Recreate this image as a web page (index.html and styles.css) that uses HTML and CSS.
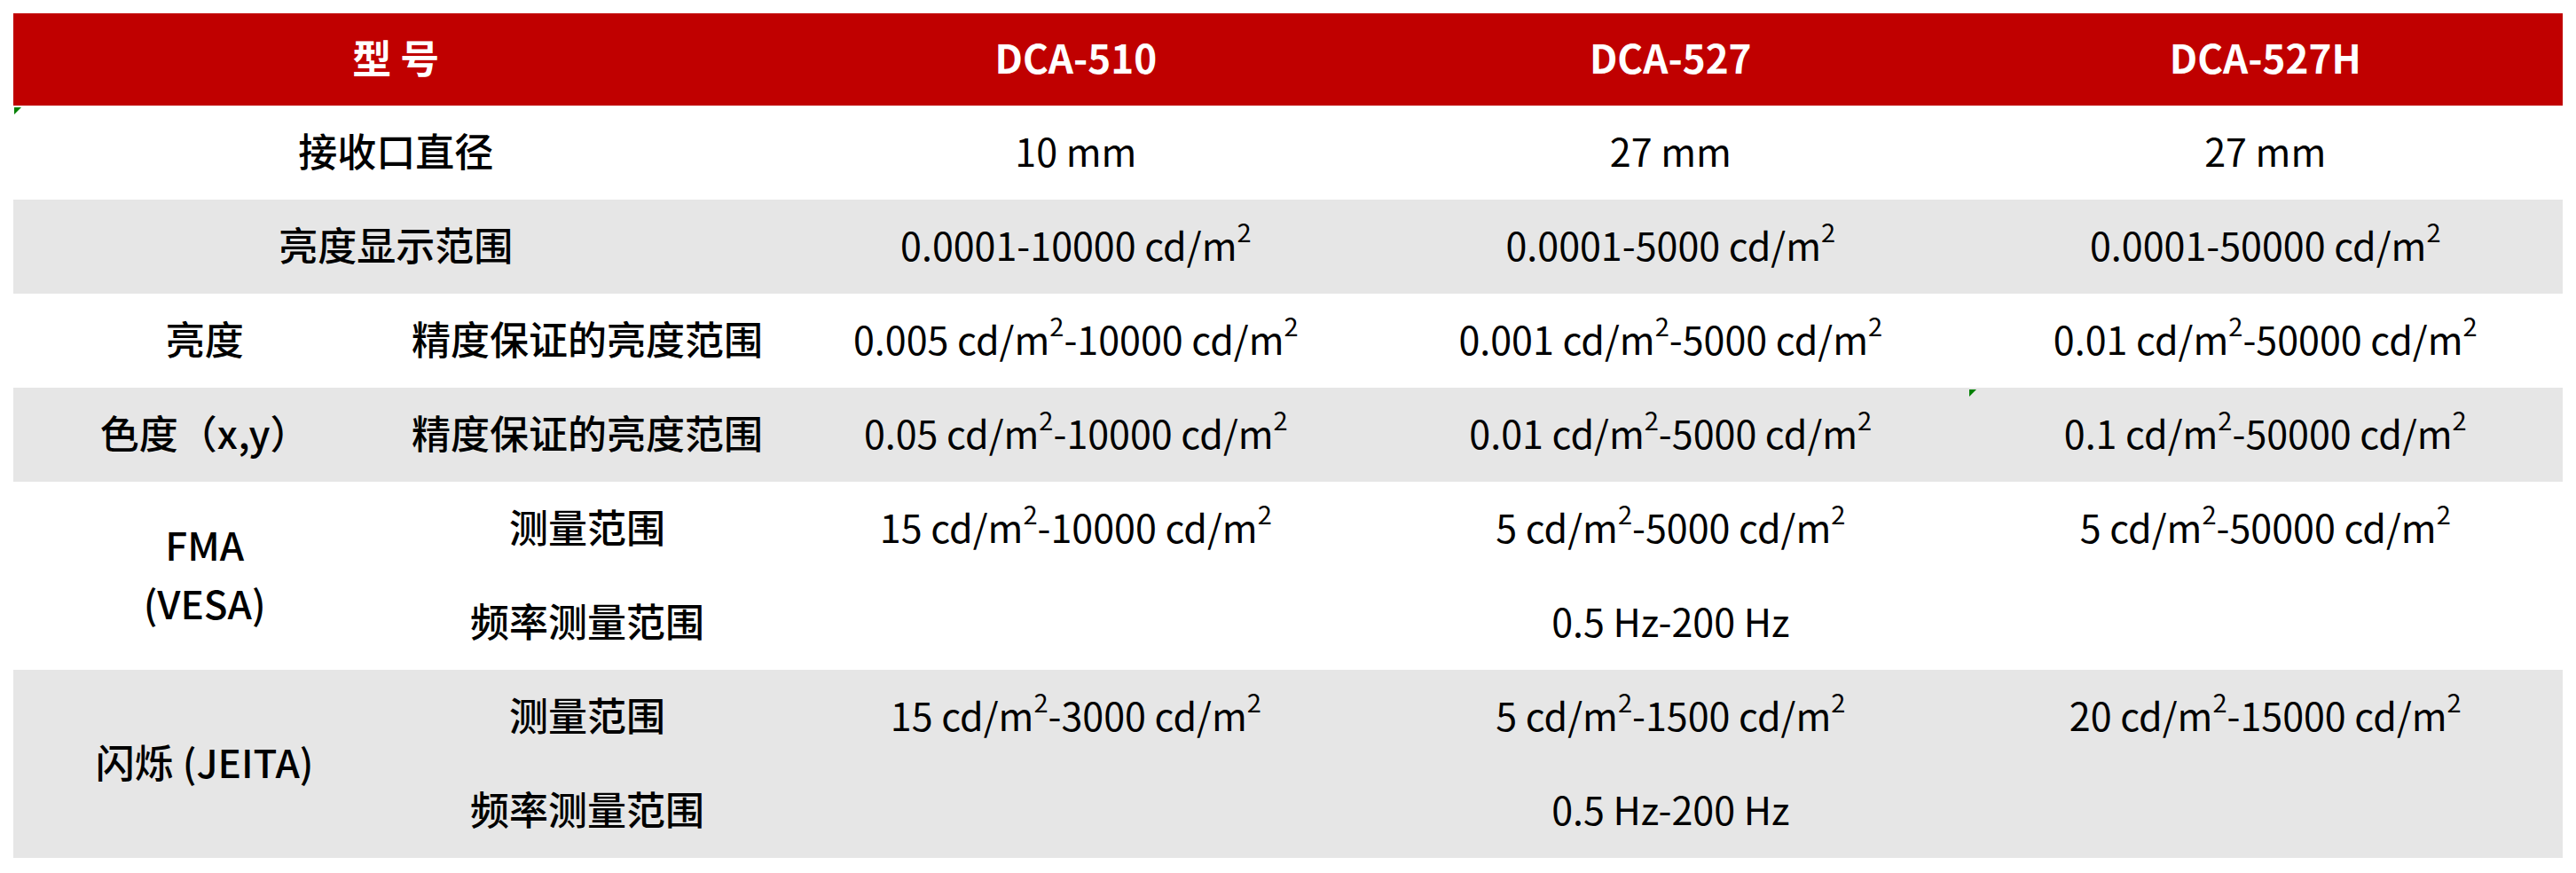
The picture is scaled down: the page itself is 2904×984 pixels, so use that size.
FILE: index.html
```html
<!DOCTYPE html>
<html lang="zh-CN">
<head>
<meta charset="utf-8">
<title>DCA 规格</title>
<link rel="stylesheet" href="styles.css">
</head>
<body>
<table class="spec">
  <colgroup>
    <col class="c-label1">
    <col class="c-label2">
    <col class="c-val">
    <col class="c-val">
    <col class="c-val">
  </colgroup>
  <thead>
    <tr class="head">
      <th colspan="2">型 号</th>
      <th>DCA-510</th>
      <th>DCA-527</th>
      <th>DCA-527H</th>
    </tr>
  </thead>
  <tbody>
    <tr class="row white">
      <td colspan="2" class="label"><span class="flag"></span>接收口直径</td>
      <td>10 mm</td>
      <td>27 mm</td>
      <td>27 mm</td>
    </tr>
    <tr class="row gray">
      <td colspan="2" class="label">亮度显示范围</td>
      <td>0.0001-10000 cd/m<sup>2</sup></td>
      <td>0.0001-5000 cd/m<sup>2</sup></td>
      <td>0.0001-50000 cd/m<sup>2</sup></td>
    </tr>
    <tr class="row white">
      <td class="label">亮度</td>
      <td class="label">精度保证的亮度范围</td>
      <td>0.005 cd/m<sup>2</sup>-10000 cd/m<sup>2</sup></td>
      <td>0.001 cd/m<sup>2</sup>-5000 cd/m<sup>2</sup></td>
      <td>0.01 cd/m<sup>2</sup>-50000 cd/m<sup>2</sup></td>
    </tr>
    <tr class="row gray">
      <td class="label">色度（x,y）</td>
      <td class="label">精度保证的亮度范围</td>
      <td>0.05 cd/m<sup>2</sup>-10000 cd/m<sup>2</sup></td>
      <td>0.01 cd/m<sup>2</sup>-5000 cd/m<sup>2</sup></td>
      <td><span class="flag"></span>0.1 cd/m<sup>2</sup>-50000 cd/m<sup>2</sup></td>
    </tr>
    <tr class="sub white">
      <td rowspan="2" class="label multi">FMA<br>(VESA)</td>
      <td class="label">测量范围</td>
      <td>15 cd/m<sup>2</sup>-10000 cd/m<sup>2</sup></td>
      <td>5 cd/m<sup>2</sup>-5000 cd/m<sup>2</sup></td>
      <td>5 cd/m<sup>2</sup>-50000 cd/m<sup>2</sup></td>
    </tr>
    <tr class="sub white">
      <td class="label">频率测量范围</td>
      <td colspan="3">0.5 Hz-200 Hz</td>
    </tr>
    <tr class="sub gray">
      <td rowspan="2" class="label">闪烁 (JEITA)</td>
      <td class="label">测量范围</td>
      <td>15 cd/m<sup>2</sup>-3000 cd/m<sup>2</sup></td>
      <td>5 cd/m<sup>2</sup>-1500 cd/m<sup>2</sup></td>
      <td>20 cd/m<sup>2</sup>-15000 cd/m<sup>2</sup></td>
    </tr>
    <tr class="sub gray">
      <td class="label">频率测量范围</td>
      <td colspan="3">0.5 Hz-200 Hz</td>
    </tr>
  </tbody>
</table>
</body>
</html>
```
FILE: styles.css
```css
html, body {
  margin: 0;
  padding: 0;
  background: #ffffff;
}

body {
  padding: 15px;
  font-family: "Noto Sans CJK SC", "Noto Sans", sans-serif;
  color: #000000;
}

.spec {
  width: 2874px;
  table-layout: fixed;
  border-collapse: collapse;
  border-spacing: 0;
}

.c-label1 { width: 431px; }
.c-label2 { width: 431px; }
.c-val { width: 670px; }

.spec th,
.spec td {
  padding: 0 0 7px 0;
  text-align: center;
  vertical-align: middle;
  font-size: 43px;
  line-height: 66px;
  position: relative;
  white-space: nowrap;
}

.head {
  height: 104px;
  background: #c00000;
}

.head th {
  color: #ffffff;
  font-weight: 700;
  font-size: 44px;
}

.row { height: 106px; }
.sub { height: 106px; }

.white { background: #ffffff; }
.gray { background: #e6e6e6; }

.spec td { font-weight: 400; }
.spec td.label {
  font-weight: 500;
  font-size: 44px;
}

.multi { line-height: 65px; }

sup {
  font-size: 29px;
  line-height: 0;
  vertical-align: 0;
  position: relative;
  top: -21px;
}

.flag {
  position: absolute;
  top: 2px;
  left: 1px;
  width: 0;
  height: 0;
  border-top: 8px solid #008000;
  border-right: 8px solid transparent;
}
```
